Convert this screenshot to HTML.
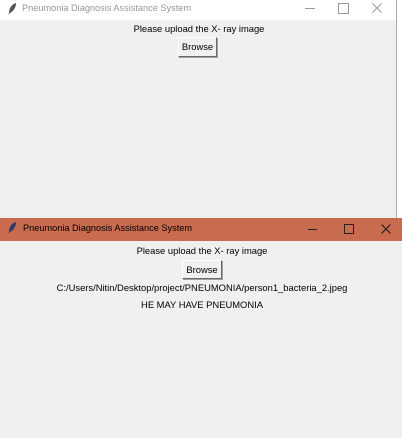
<!DOCTYPE html>
<html><head><style>
body{margin:0;width:402px;height:438px;position:relative;overflow:hidden;background:#fff;font-family:"Liberation Sans",sans-serif;}
.a{position:absolute;}
.t{position:absolute;font-size:9.4px;color:#000;white-space:nowrap;}
.btn{position:absolute;background:#f0f0f0;border:1px solid #fff;border-right-color:#696969;border-bottom-color:#696969;box-shadow:1px 1px 0 #a0a0a0;font-size:9.4px;text-align:center;box-sizing:border-box;}
</style></head><body>
<!-- window 1 -->
<div class="a" style="left:0;top:0;width:396px;height:20px;background:#fff"></div>
<div class="a" style="left:0;top:20px;width:396px;height:198px;background:#f0f0f0"></div>
<div class="a" style="left:396px;top:0;width:1px;height:218px;background:#aaa"></div>
<svg class="a" style="left:6px;top:2px" width="12" height="14"><path d="M10 1 C6 2 3 6 3 11 L2 13 L4 11 C8 9 10 5 10 1Z" fill="#555"/></svg>
<div class="t" style="left:22px;top:3px;color:#999;font-size:9.2px">Pneumonia Diagnosis Assistance System</div>
<div class="a" style="left:305px;top:8px;width:10px;height:1px;background:#999"></div>
<div class="a" style="left:338px;top:3px;width:9px;height:9px;border:1px solid #999"></div>
<svg class="a" style="left:372px;top:3px" width="10" height="10"><path d="M0.5 0.5L9.5 9.5M9.5 0.5L0.5 9.5" stroke="#999" stroke-width="1"/></svg>
<div class="t" style="left:0;width:398px;text-align:center;top:23px">Please upload the X- ray image</div>
<div class="btn" style="left:178px;top:37px;width:39px;height:20px;line-height:18px">Browse</div>
<!-- window 2 -->
<div class="a" style="left:0;top:218px;width:402px;height:23px;background:#c96b4f"></div>
<div class="a" style="left:0;top:241px;width:402px;height:197px;background:#f0f0f0"></div>
<svg class="a" style="left:6px;top:221px" width="12" height="14"><path d="M10 1 C6 2 3 6 3 11 L2 13 L4 11 C8 9 10 5 10 1Z" fill="#2b3a6a"/></svg>
<div class="t" style="left:23px;top:223px;font-size:9.2px">Pneumonia Diagnosis Assistance System</div>
<div class="a" style="left:308px;top:229px;width:9px;height:1px;background:#222"></div>
<div class="a" style="left:344px;top:224px;width:8px;height:8px;border:1px solid #222"></div>
<svg class="a" style="left:381px;top:224px" width="10" height="10"><path d="M0.5 0.5L9.5 9.5M9.5 0.5L0.5 9.5" stroke="#222" stroke-width="1.2"/></svg>
<div class="t" style="left:0;width:404px;text-align:center;top:245px">Please upload the X- ray image</div>
<div class="btn" style="left:182px;top:260px;width:40px;height:19px;line-height:17px">Browse</div>
<div class="t" style="left:0;width:404px;text-align:center;top:282px">C:/Users/Nitin/Desktop/project/PNEUMONIA/person1_bacteria_2.jpeg</div>
<div class="t" style="left:0;width:404px;text-align:center;top:299px">HE MAY HAVE PNEUMONIA</div>
</body></html>
